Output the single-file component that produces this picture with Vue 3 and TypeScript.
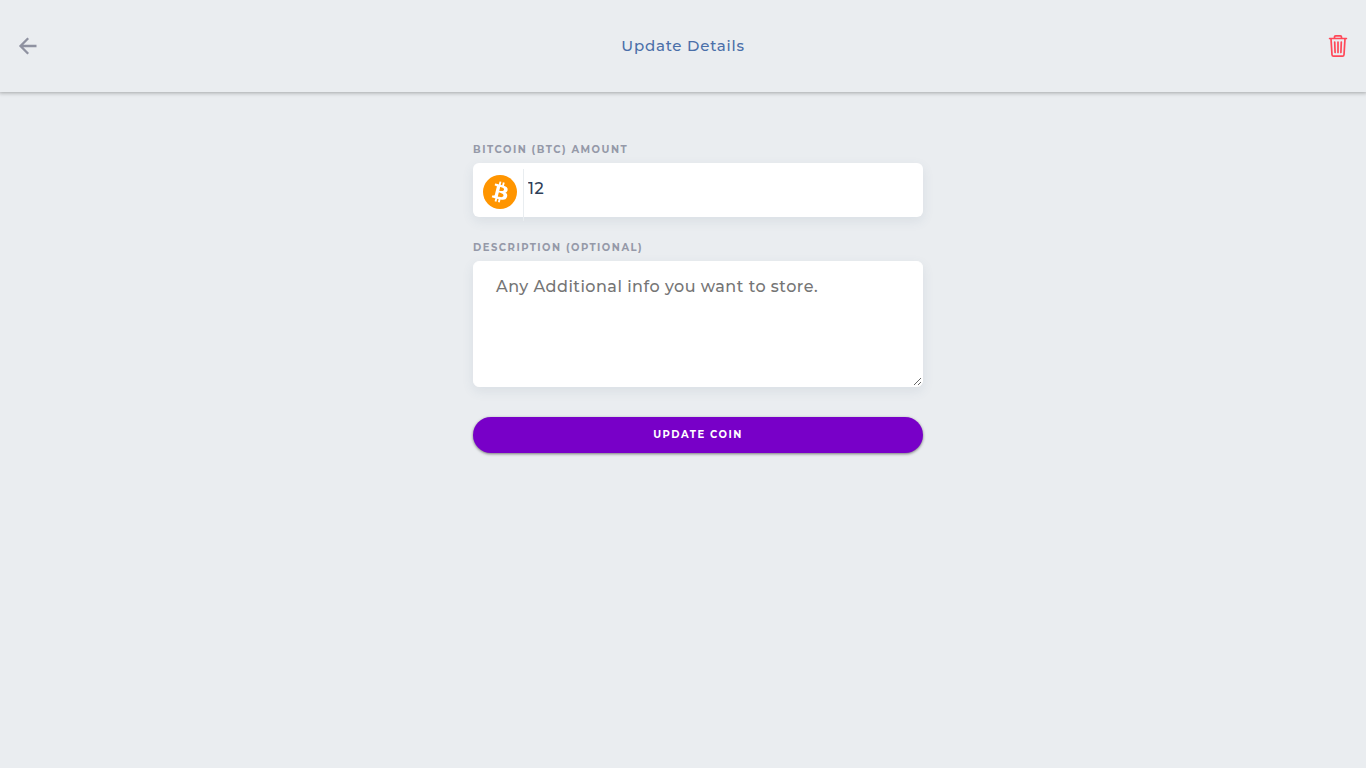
<script setup lang="ts">
import { ref } from 'vue'

const amount = ref('12')
const description = ref('')
</script>

<template>
  <div class="page">
    <header class="bar">
      <button class="icon-button" type="button" aria-label="Go back">
        <svg width="24" height="24" viewBox="0 0 24 24" fill="none" stroke="#8f92a1" stroke-width="2.3">
          <path d="M20.5 12H5M12.2 4.2L4.5 12L12.2 19.8" />
        </svg>
      </button>
      <h1 class="title">Update Details</h1>
      <button class="icon-button" type="button" aria-label="Delete coin">
        <svg width="24" height="24" viewBox="0 0 24 24" fill="none" stroke="#ff4858" stroke-width="1.7" stroke-linecap="round" stroke-linejoin="round">
          <path d="M3.6 4.5h16.8M8.5 4.2V3q0-1.2 1.2-1.2h4.6q1.2 0 1.2 1.2v1.2M5 4.7l1 16q.1 1.5 1.5 1.5h9q1.4 0 1.5-1.5l1-16" />
          <path d="M8.7 8l.4 10.5M12 8v10.5M15.3 8l-.4 10.5" />
        </svg>
      </button>
    </header>

    <main class="content">
      <form class="form" @submit.prevent>
        <label class="label" for="amount">BITCOIN (BTC) AMOUNT</label>
        <div class="amount-box">
          <span class="coin">
            <svg width="34" height="34" viewBox="0 0 32 32">
              <circle cx="16" cy="16" r="16" fill="#ff9500" />
              <path fill="#fff" d="M23.189 14.02c.314-2.096-1.283-3.223-3.465-3.975l.708-2.84-1.728-.43-.69 2.765c-.454-.114-.92-.22-1.385-.326l.695-2.783L15.596 6l-.708 2.839c-.376-.086-.746-.17-1.104-.26l.002-.009-2.384-.595-.46 1.846s1.283.294 1.256.312c.7.175.826.638.805 1.006l-.806 3.235c.048.012.11.03.18.057l-.183-.045-1.13 4.532c-.086.212-.303.531-.793.41.018.025-1.256-.313-1.256-.313l-.858 1.978 2.25.561c.418.105.828.215 1.231.318l-.715 2.872 1.727.43.708-2.84c.472.127.93.245 1.378.357l-.706 2.828 1.728.43.715-2.866c2.948.558 5.164.333 6.097-2.333.752-2.146-.037-3.385-1.588-4.192 1.13-.26 1.98-1.003 2.207-2.538zm-3.95 5.538c-.533 2.147-4.148.986-5.32.695l.95-3.805c1.172.293 4.929.872 4.37 3.11zm.535-5.569c-.487 1.953-3.495.96-4.47.717l.86-3.45c.975.243 4.118.696 3.61 2.733z" />
            </svg>
          </span>
          <input id="amount" v-model="amount" class="amount" type="text" inputmode="decimal" />
        </div>

        <label class="label" for="description">DESCRIPTION (OPTIONAL)</label>
        <textarea id="description" v-model="description" class="description" placeholder="Any Additional info you want to store."></textarea>

        <button class="submit" type="submit">UPDATE COIN</button>
      </form>
    </main>
  </div>
</template>

<style>
body {
  background: #eaedf0;
}
</style>

<style scoped>
.page {
  min-height: 100vh;
  background: #eaedf0;
  font-family: Montserrat, Inter, "Open Sans", sans-serif;
}

.page * {
  box-sizing: border-box;
}

.bar {
  display: flex;
  align-items: center;
  justify-content: space-between;
  padding: 30px 16px;
  box-shadow: 0 0 4px 1px rgba(0, 0, 0, 0.3);
}

.icon-button {
  display: flex;
  padding: 4px 0;
  border: 0;
  background: none;
  cursor: pointer;
}

.title {
  margin: 0;
  color: #4a6fa9;
  font-size: 15px;
  line-height: 20px;
  font-weight: 500;
  letter-spacing: 0.05em;
}

.content {
  padding: 51px 0 30px 30px;
}

.form {
  display: flex;
  flex-direction: column;
  max-width: 450px;
  margin: 0 auto;
}

.label {
  margin-bottom: 6px;
  color: #9599a8;
  font-size: 10px;
  line-height: 14px;
  font-weight: 700;
  letter-spacing: 0.15em;
}

.amount-box,
.description {
  border-radius: 6px;
  background: #fff;
  box-shadow: 0 4px 12px rgba(70, 100, 130, 0.1);
}

.amount-box {
  display: flex;
  height: 54px;
  margin-bottom: 24px;
}

.coin {
  flex: none;
  width: 51px;
  height: 52px;
  margin-top: 6px;
  padding: 6px 0 0 10px;
  border-right: 1px solid #e9edf0;
}

.amount {
  flex: 1;
  min-width: 0;
  padding: 0 4px 2px;
  border: 0;
  border-radius: 6px;
  outline: none;
  background: transparent;
  color: #2f3f58;
  font: 500 16px/24px Montserrat, Inter, "Open Sans", sans-serif;
  letter-spacing: 0.03em;
}

.description {
  height: 126px;
  margin-bottom: 30px;
  padding: 13px 22px;
  border: 1px solid #fff;
  outline: none;
  resize: both;
  color: #2f3f58;
  font: 500 16px/24px Montserrat, Inter, "Open Sans", sans-serif;
  letter-spacing: 0.03em;
}

.description::placeholder {
  color: #757575;
}

.submit {
  height: 36px;
  padding: 0 16px;
  border: 0;
  border-radius: 18px;
  background: #7800c8;
  box-shadow: 0 1px 3px rgba(0, 0, 0, 0.5);
  color: #fff;
  font: 700 10px/14px Montserrat, Inter, "Open Sans", sans-serif;
  letter-spacing: 0.15em;
  cursor: pointer;
}
</style>
